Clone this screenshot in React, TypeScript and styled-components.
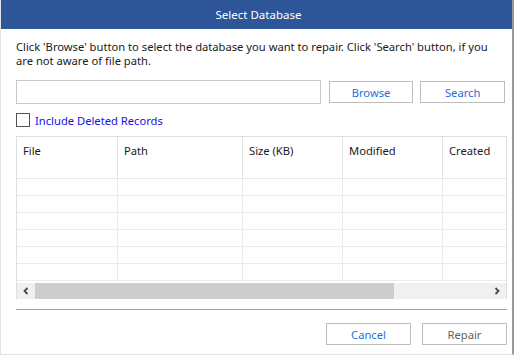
import React from "react";
import styled, { createGlobalStyle } from "styled-components";

const GlobalStyle = createGlobalStyle`
  html, body {
    margin: 0;
    padding: 0;
    background: #ffffff;
  }
  body {
    font-family: "Noto Sans", "Open Sans", sans-serif;
  }
`;

const COLUMNS = [
  { title: "File", width: 101 },
  { title: "Path", width: 125 },
  { title: "Size (KB)", width: 100 },
  { title: "Modified", width: 100 },
  { title: "Created", width: 100 },
];
const ROW_COUNT = 6;

const DialogDiv = styled.div`
  width: 514px;
  height: 355px;
  box-sizing: border-box;
  border-left: 1px solid #e4e4e4;
  border-right: 2px solid #9a9a9a;
  border-bottom: 1px solid #e4e4e4;
  display: flex;
  flex-direction: column;
  background: #ffffff;
  font-size: 11.2px;
  color: #1a1a1a;
`;

const TitleBar = styled.div`
  height: 29px;
  background: #2d5597;
  color: #ffffff;
  display: flex;
  align-items: center;
  justify-content: center;
  padding-left: 4px;
  font-size: 11.5px;
  flex-shrink: 0;
`;

const BodyDiv = styled.div`
  flex: 1;
  display: flex;
  flex-direction: column;
  padding: 11px 7px 0 15px;
`;

const Instruction = styled.div`
  line-height: 13.5px;
  font-size: 11.2px;
`;

const InputRow = styled.div`
  display: flex;
  align-items: center;
  margin-top: 13px;
  height: 24px;
`;

const PathInput = styled.div`
  width: 304px;
  height: 22px;
  border: 1px solid #c9c9c9;
`;

const ButtonDiv = styled.div<{ $disabled?: boolean }>`
  width: 83px;
  height: 20px;
  border: 1px solid #bdbdbd;
  display: flex;
  align-items: center;
  justify-content: center;
  font-size: 11.2px;
  color: ${(p) => (p.$disabled ? "#5f5f5f" : "#1d6fe0")};
  cursor: default;
`;

const CheckRow = styled.div`
  display: flex;
  align-items: center;
  margin-top: 9px;
  height: 14px;
`;

const CheckBox = styled.div`
  width: 12px;
  height: 12px;
  border: 1px solid #555555;
`;

const CheckLabel = styled.span`
  margin-left: 5px;
  color: #1212e6;
  font-size: 11.2px;
`;

const TableBox = styled.div`
  margin-top: 9px;
  width: 491px;
  height: 163px;
  box-sizing: border-box;
  border: 1px solid #dedede;
  border-bottom: none;
  display: flex;
  flex-direction: column;
  overflow: hidden;
`;

const TableScroll = styled.div`
  flex: 1;
  overflow: hidden;
`;

const HeaderRow = styled.div`
  display: flex;
  height: 42px;
  border-bottom: 1px solid #e8e8e8;
  box-sizing: border-box;
`;

const HeaderCell = styled.div<{ $width: number }>`
  width: ${(p) => p.$width}px;
  flex-shrink: 0;
  box-sizing: border-box;
  border-right: 1px solid #e3e3e3;
  padding: 6px 0 0 6px;
  font-size: 11.2px;
  color: #1a1a1a;
`;

const DataRow = styled.div`
  display: flex;
  height: 17px;
  border-bottom: 1px solid #ececec;
  box-sizing: border-box;
`;

const DataCell = styled.div<{ $width: number }>`
  width: ${(p) => p.$width}px;
  flex-shrink: 0;
  box-sizing: border-box;
  border-right: 1px solid #ececec;
`;

const ScrollBar = styled.div`
  height: 16px;
  margin-top: 2px;
  background: #f0f0f0;
  display: flex;
  align-items: center;
  flex-shrink: 0;
`;

const ScrollArrow = styled.div`
  width: 18px;
  height: 16px;
  display: flex;
  align-items: center;
  justify-content: center;
  flex-shrink: 0;
`;

const ScrollThumb = styled.div`
  width: 359px;
  height: 16px;
  background: #cdcdcd;
`;

const ScrollTrack = styled.div`
  flex: 1;
`;

const Separator = styled.div`
  margin-top: 10px;
  width: 491px;
  height: 1px;
  background: #a6a6a6;
`;

const FooterRow = styled.div`
  display: flex;
  justify-content: flex-end;
  gap: 11px;
  margin-top: 13px;
  width: 491px;
`;

const Arrow = ({ dir }: { dir: "left" | "right" }) => (
  <svg width="8" height="8" viewBox="0 0 8 8">
    <path
      d={dir === "left" ? "M5.5 1 L2.5 4 L5.5 7" : "M2.5 1 L5.5 4 L2.5 7"}
      stroke="#4a4a4a"
      strokeWidth="1.8"
      fill="none"
    />
  </svg>
);

const App = () => {
  const rows = Array.from({ length: ROW_COUNT });

  return (
    <>
      <GlobalStyle />
      <DialogDiv>
        <TitleBar>Select Database</TitleBar>
        <BodyDiv>
          <Instruction>
            Click 'Browse' button to select the database you want to repair. Click 'Search' button, if you
            <br />
            are not aware of file path.
          </Instruction>
          <InputRow>
            <PathInput />
            <ButtonDiv style={{ marginLeft: 8 }}>Browse</ButtonDiv>
            <ButtonDiv style={{ marginLeft: 7 }}>Search</ButtonDiv>
          </InputRow>
          <CheckRow>
            <CheckBox />
            <CheckLabel>Include Deleted Records</CheckLabel>
          </CheckRow>
          <TableBox>
            <TableScroll>
              <HeaderRow>
                {COLUMNS.map((c) => (
                  <HeaderCell key={c.title} $width={c.width}>
                    {c.title}
                  </HeaderCell>
                ))}
              </HeaderRow>
              {rows.map((_, i) => (
                <DataRow key={i}>
                  {COLUMNS.map((c) => (
                    <DataCell key={c.title} $width={c.width} />
                  ))}
                </DataRow>
              ))}
            </TableScroll>
            <ScrollBar>
              <ScrollArrow>
                <Arrow dir="left" />
              </ScrollArrow>
              <ScrollThumb />
              <ScrollTrack />
              <ScrollArrow>
                <Arrow dir="right" />
              </ScrollArrow>
            </ScrollBar>
          </TableBox>
          <Separator />
          <FooterRow>
            <ButtonDiv>Cancel</ButtonDiv>
            <ButtonDiv $disabled>Repair</ButtonDiv>
          </FooterRow>
        </BodyDiv>
      </DialogDiv>
    </>
  );
};

export default App;
